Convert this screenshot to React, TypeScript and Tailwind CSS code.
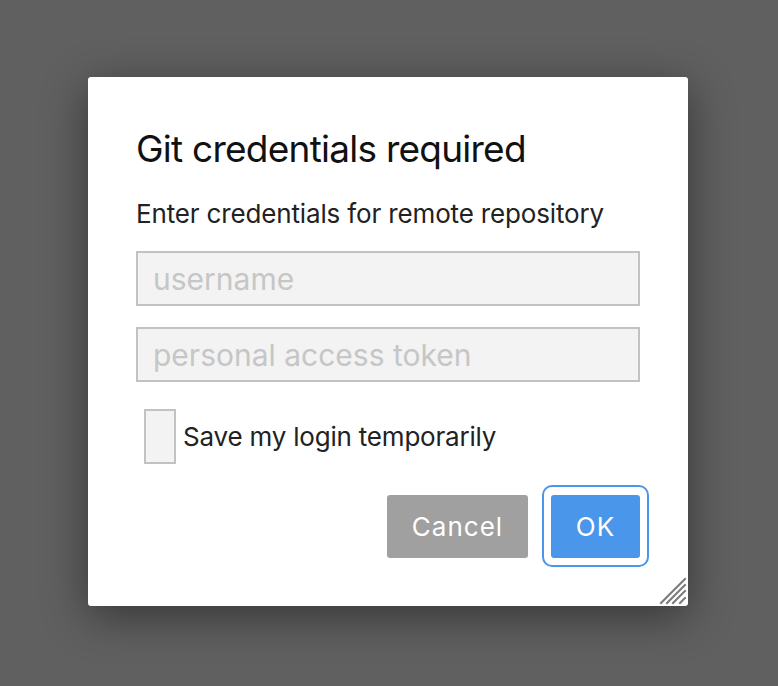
export default function App() {
  return (
    <div
      className="w-[778px] h-[686px] bg-[#606060] pt-[77px] pl-[88px] overflow-hidden"
      style={{ fontFamily: "Inter, 'Noto Sans', sans-serif" }}
    >
      <div className="relative w-[600px] h-[529px] bg-white rounded-[3px] shadow-[0_10px_45px_rgba(0,0,0,0.45)] px-[48px] pt-[50px]">
        <h1 className="text-[37px] leading-[44px] tracking-[-0.75px] text-[#111] font-normal">Git credentials required</h1>
        <p className="mt-[27px] text-[26px] leading-[32px] tracking-[-0.15px] text-[#222]">Enter credentials for remote repository</p>

        <div className="mt-[21px] flex flex-col gap-[21px]">
          <input
            placeholder="username"
            className="w-full h-[55px] border-2 border-[#c2c2c2] bg-[#f3f3f3] px-[15px] text-[30px] text-[#222] placeholder:text-[#c6c6c6] outline-none"
          />
          <input
            placeholder="personal access token"
            className="w-full h-[55px] border-2 border-[#c2c2c2] bg-[#f3f3f3] px-[15px] text-[30px] text-[#222] placeholder:text-[#c6c6c6] outline-none"
          />
        </div>

        <label className="mt-[27px] ml-[8px] flex items-center gap-[7px]">
          <span className="w-[32px] h-[55px] border-2 border-[#c2c2c2] bg-[#f3f3f3]" />
          <span className="text-[26px] leading-[32px] tracking-[-0.2px] text-[#222]">Save my login temporarily</span>
        </label>

        <div className="mt-[21px] -mr-[9px] flex justify-end items-start gap-[14px]">
          <button className="mt-[10px] w-[141px] h-[63px] rounded-[3px] bg-[#a0a0a0] text-white text-[26px] tracking-[1px]">
            Cancel
          </button>
          <div className="border-2 border-[#4a96ea] rounded-[10px] px-[7px] pt-[8px] pb-[7px]">
            <button className="block w-[89px] h-[63px] rounded-[3px] bg-[#4a96ea] text-white text-[26px] tracking-[1px]">
              OK
            </button>
          </div>
        </div>

        <svg className="absolute right-[1px] bottom-[1px]" width="28" height="28" viewBox="0 0 28 28">
          <g stroke="#7a7a7a" strokeWidth="2" strokeLinecap="square">
            <line x1="2" y1="26" x2="26" y2="2" />
            <line x1="8" y1="26" x2="26" y2="8" />
            <line x1="14" y1="26" x2="26" y2="14" />
            <line x1="21" y1="26" x2="26" y2="21" />
          </g>
        </svg>
      </div>
    </div>
  );
}
